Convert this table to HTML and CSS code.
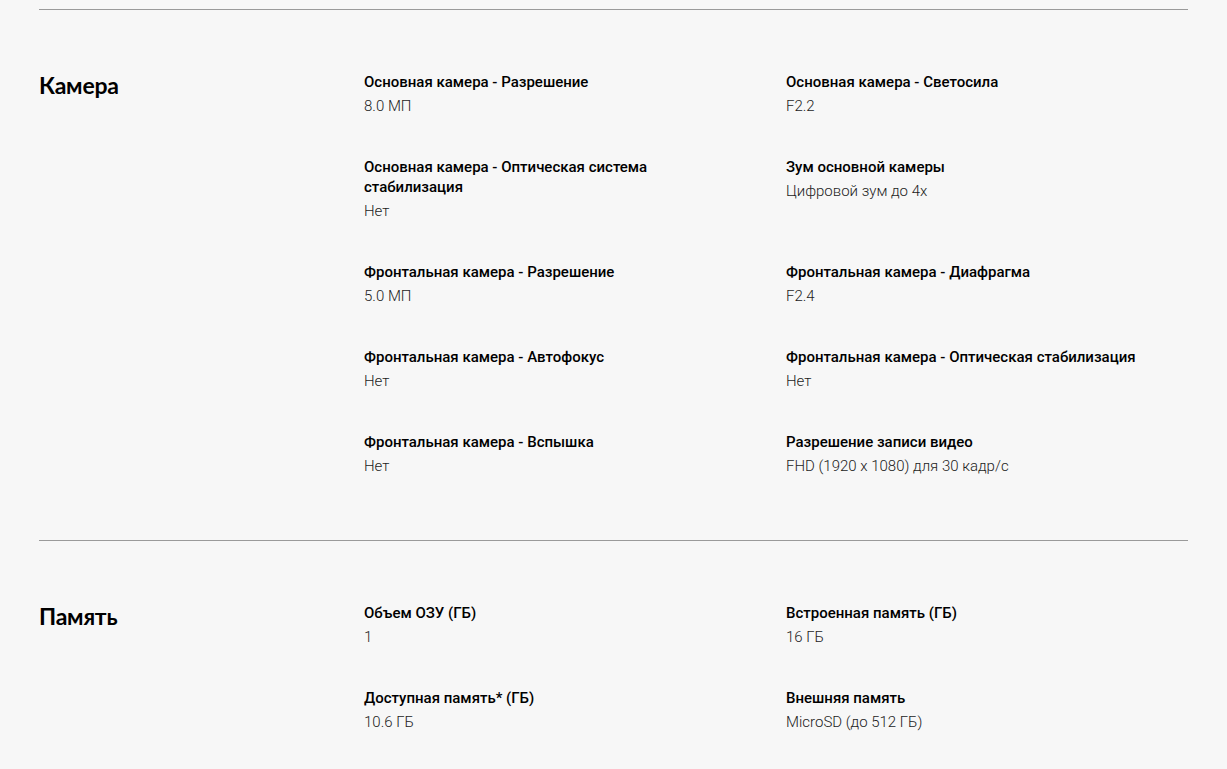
FILE: index.html
```html
<!DOCTYPE html>
<html lang="ru">
<head>
<meta charset="utf-8">
<link rel="stylesheet" href="styles.css">
</head>
<body>
<div class="specs">
  <section class="spec-section">
    <h2 class="spec-title">Камера</h2>
    <div class="spec-grid">
      <div class="item"><div class="label">Основная камера - Разрешение</div><div class="value">8.0 МП</div></div>
      <div class="item"><div class="label">Основная камера - Светосила</div><div class="value">F2.2</div></div>
      <div class="item"><div class="label">Основная камера - Оптическая система стабилизация</div><div class="value">Нет</div></div>
      <div class="item"><div class="label">Зум основной камеры</div><div class="value">Цифровой зум до 4x</div></div>
      <div class="item"><div class="label">Фронтальная камера - Разрешение</div><div class="value">5.0 МП</div></div>
      <div class="item"><div class="label">Фронтальная камера - Диафрагма</div><div class="value">F2.4</div></div>
      <div class="item"><div class="label">Фронтальная камера - Автофокус</div><div class="value">Нет</div></div>
      <div class="item"><div class="label">Фронтальная камера - Оптическая стабилизация</div><div class="value">Нет</div></div>
      <div class="item"><div class="label">Фронтальная камера - Вспышка</div><div class="value">Нет</div></div>
      <div class="item"><div class="label">Разрешение записи видео</div><div class="value">FHD (1920 x 1080) для 30 кадр/с</div></div>
    </div>
  </section>
  <section class="spec-section">
    <h2 class="spec-title">Память</h2>
    <div class="spec-grid">
      <div class="item"><div class="label">Объем ОЗУ (ГБ)</div><div class="value">1</div></div>
      <div class="item"><div class="label">Встроенная память (ГБ)</div><div class="value">16 ГБ</div></div>
      <div class="item"><div class="label">Доступная память* (ГБ)</div><div class="value">10.6 ГБ</div></div>
      <div class="item"><div class="label">Внешняя память</div><div class="value">MicroSD (до 512 ГБ)</div></div>
    </div>
  </section>
</div>
</body>
</html>
```

FILE: styles.css
```css
html, body {
  margin: 0;
  padding: 0;
  background: #f7f7f7;
}
body {
  font-family: "Roboto", "Liberation Sans", sans-serif;
  color: #000;
}
.specs {
  padding: 9px 39px 0;
}
.spec-section {
  display: grid;
  grid-template-columns: 325px 1fr;
  border-top: 1px solid #9a9a9a;
  padding: 62px 0 64px;
}
.spec-title {
  margin: 0;
  font-family: "Lato", "Noto Sans", sans-serif;
  font-weight: 700;
  font-size: 23px;
  line-height: 27px;
  letter-spacing: -0.2px;
  color: #000;
}
.spec-grid {
  display: grid;
  grid-template-columns: 422px 1fr;
  row-gap: 41px;
}
.label {
  font-size: 15px;
  font-weight: 500;
  line-height: 20px;
  color: #000;
  padding-right: 40px;
}
.value {
  margin-top: 4px;
  font-size: 15px;
  font-weight: 300;
  line-height: 20px;
  color: #1c1c1c;
}
```
